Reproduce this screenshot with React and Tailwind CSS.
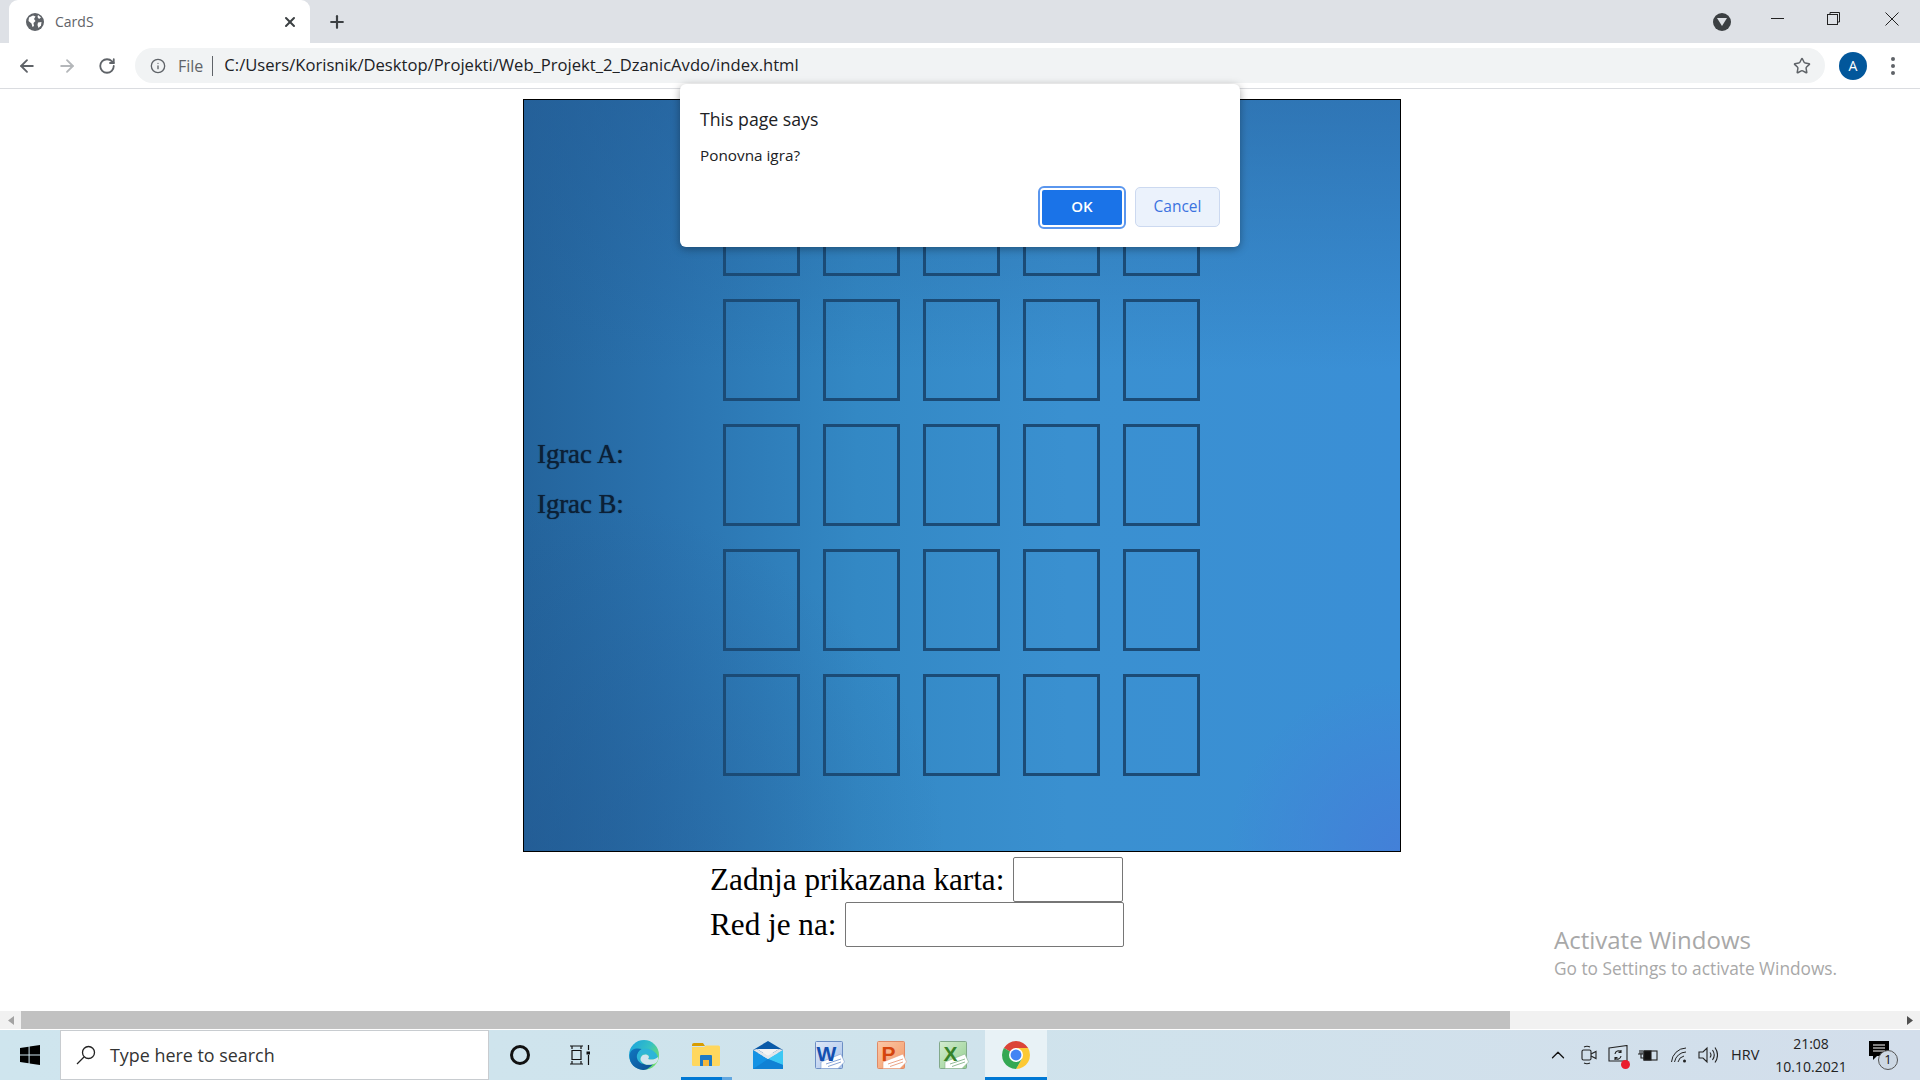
import React from "react";
import { ArrowLeft, ArrowRight, RotateCw, Info, Star, X, Plus, ChevronUp } from "lucide-react";

const UI = "font-['Open_Sans',sans-serif]";
const SERIF = "font-['Liberation_Serif',serif]";

function Globe() {
  return (
    <svg width="18" height="18" viewBox="0 0 18 18">
      <circle cx="9" cy="9" r="9" fill="#5f6368" />
      <path d="M3 4.5 L7 2.5 L9.5 3.5 L8 6 L9.5 8 L7.5 10 L8 13 L6.5 14 L5.5 10.5 L2.5 8 Z" fill="#fff" />
      <path d="M12 9.5 L15.5 9 L15 12.5 L12.5 15 L11.5 12 Z" fill="#fff" />
      <path d="M12 2 L15 4.5 L13 6 L11.5 4 Z" fill="#fff" />
    </svg>
  );
}

function Edge() {
  return (
    <svg width="30" height="30" viewBox="0 0 30 30">
      <defs>
        <linearGradient id="e1" x1="0" y1="0" x2="1" y2="0.6">
          <stop offset="0" stopColor="#1aa0e0" />
          <stop offset="0.6" stopColor="#35c1c4" />
          <stop offset="1" stopColor="#6fdc6a" />
        </linearGradient>
        <linearGradient id="e2" x1="0" y1="0" x2="1" y2="1">
          <stop offset="0" stopColor="#1077c0" />
          <stop offset="1" stopColor="#0c4f92" />
        </linearGradient>
      </defs>
      <circle cx="15" cy="15" r="15" fill="url(#e1)" />
      <path d="M0.5 16 C1 8 8 8 13 9 C9 11 8 14 9 18 C10.5 24 17 26 24 24 C20 29 16 30 14 30 C6 29 0.5 24 0.5 16Z" fill="url(#e2)" />
      <path d="M13 9 C20 7 27 11 29 17 C27 20 22 20 19 19 C22 16 18 12 13 14 C10 16 10 21 14 24 C10 23 7 19 8 15 C9 12 11 10 13 9Z" fill="#2db5d8" />
      <path d="M17 14.5 C19.5 15 21 17 19 19 C22 20 25.5 20 29 17 C29.5 19 29 21 27 23 C23 25.5 15 26 12 21 C10.5 18 13 14 17 14.5Z" fill="#d2e5ee" />
    </svg>
  );
}

function Explorer() {
  return (
    <svg width="28" height="26" viewBox="0 0 28 26">
      <path d="M0 3 Q0 1 2 1 H11 L13 4 H0 Z" fill="#d89c00" />
      <path d="M0 5 H12 L14 3.5 H26.5 Q28 3.5 28 5 V23 Q28 24 26.5 24 H1.5 Q0 24 0 23 Z" fill="#ffd75e" />
      <path d="M9 13 H19 Q20 13 20 14 V24 H17 V18 H11 V24 H8 V14 Q8 13 9 13Z" fill="#1f7ac6" />
      <rect x="11" y="18" width="6" height="6" fill="#f6b73c" />
    </svg>
  );
}

function Mail() {
  return (
    <svg width="30" height="28" viewBox="0 0 30 28">
      <path d="M15 0 L30 9 V12 H0 V9 Z" fill="#0a5aa8" />
      <path d="M4 8 H26 L15 15 Z" fill="#f4f4f4" />
      <path d="M0 9 L15 18 L30 9 V28 H0Z" fill="#1492e4" />
      <path d="M30 9 V24 L15 18 Z" fill="#3cc8f4" />
      <path d="M0 28 L15 18 L30 24 V28 Z" fill="#0f80d2" opacity="0.9" />
      <path d="M0 9 L4 8 L15 15 L26 8 L30 9 L15 18 Z" fill="#e2e6ea" />
    </svg>
  );
}

function Office({ id, letter, border, from, to, color, page }) {
  return (
    <svg width="30" height="28" viewBox="0 0 30 28">
      <defs>
        <linearGradient id={id} x1="0" y1="0" x2="1" y2="1">
          <stop offset="0" stopColor={from} />
          <stop offset="1" stopColor={to} />
        </linearGradient>
      </defs>
      <rect x="0.5" y="0.5" width="27" height="27" rx="1" fill={"url(#" + id + ")"} stroke={border} />
      <path d="M6 21 L26 13 L29.5 21 L23 27.5 H6 Z" fill="#fff" stroke={page} strokeWidth="0.6" />
      <path d="M11 23 L26 18 M13 25.5 L26 21" stroke={page} strokeWidth="0.9" />
      <text x="11.5" y="19.5" fontSize="21" fontWeight="700" fill={color} textAnchor="middle" fontFamily="'Liberation Sans',sans-serif">{letter}</text>
    </svg>
  );
}

function Chrome() {
  return (
    <svg width="28" height="28" viewBox="4 4 40 40">
      <path d="M6.68 14A20 20 0 0 1 41.32 14H24L15.34 19Z" fill="#db4437" />
      <path d="M41.32 14A20 20 0 0 1 24 44L32.66 29L24 24V14Z" fill="#fcc934" />
      <path d="M24 44A20 20 0 0 1 6.68 14L15.34 19L24 24L32.66 29Z" fill="#34a853" />
      <circle cx="24" cy="24" r="10" fill="#fff" />
      <circle cx="24" cy="24" r="7.8" fill="#4285f4" />
    </svg>
  );
}

function TaskCell({ children, className = "" }) {
  return <div className={"h-full flex items-center justify-center shrink-0 " + className}>{children}</div>;
}

function Card() {
  return <div className="w-[77px] h-[102px] border-[3px] border-[#1b4b76]" />;
}

export default function App() {
  const cards = Array.from({ length: 25 }, (_, i) => i);
  return (
    <div className="w-[1920px] h-[1080px] overflow-hidden relative bg-white flex flex-col">
      {/* Tab strip */}
      <div className="h-[43px] bg-[#dee1e6] flex items-end shrink-0">
        <div className="ml-[9px] w-[301px] h-[43px] bg-white rounded-t-[9px] flex items-center pl-[17px] pr-[12px]">
          <Globe />
          <span className={UI + " ml-[11px] text-[14px] text-[#5f6368] flex-1"}>CardS</span>
          <X size={16} strokeWidth={3} color="#3c4043" />
        </div>
        <div className="h-[43px] ml-[17px] flex items-center">
          <Plus size={20} strokeWidth={2.6} color="#3c4043" />
        </div>
        <div className="flex-1 h-[43px] flex items-center justify-end">
          <div className="w-[18px] h-[18px] rounded-full bg-[#3c4043] flex items-center justify-center mr-[40px]">
            <svg width="10" height="8" viewBox="0 0 10 8"><path d="M0 0 H10 L5 8Z" fill="#dee1e6" /></svg>
          </div>
          <div className="w-[13px] h-[1px] bg-[#222] mb-[6px] mr-[43px]" />
          <svg width="13" height="13" viewBox="0 0 13 13" className="mb-[6px] mr-[45px]" fill="none" stroke="#222">
            <rect x="0.5" y="2.5" width="10" height="10" />
            <path d="M3 2.5 V0.5 H12.5 V10 H10.5" />
          </svg>
          <svg width="14" height="14" viewBox="0 0 14 14" className="mb-[6px] mr-[21px]" stroke="#222">
            <path d="M0.5 0.5 L13.5 13.5 M13.5 0.5 L0.5 13.5" />
          </svg>
        </div>
      </div>

      {/* Toolbar */}
      <div className="h-[46px] shrink-0 bg-white border-b border-[#dadce0] flex items-center">
        <div className="w-[135px] flex items-center shrink-0">
          <ArrowLeft size={20} strokeWidth={2.2} color="#5f6368" className="ml-[17px]" />
          <ArrowRight size={20} strokeWidth={2.2} color="#b4b7ba" className="ml-[20px]" />
          <RotateCw size={18} strokeWidth={2.4} color="#5f6368" className="ml-[21px]" />
        </div>
        <div className="w-[1690px] h-[35px] rounded-full bg-[#f1f3f4] flex items-center pl-[15px] pr-[14px]">
          <Info size={16} color="#5f6368" strokeWidth={2} />
          <span className={UI + " ml-[12px] text-[16px] text-[#5f6368]"}>File</span>
          <span className="ml-[9px] w-[1px] h-[20px] bg-[#5f6368]" />
          <span className={UI + " ml-[11px] text-[16.6px] text-[#202124] flex-1"}>C:/Users/Korisnik/Desktop/Projekti/Web_Projekt_2_DzanicAvdo/index.html</span>
          <Star size={18} color="#5f6368" strokeWidth={2} />
        </div>
        <div className="ml-[14px] w-[28px] h-[28px] rounded-full bg-[#02579b] flex items-center justify-center">
          <span className={UI + " text-white text-[14px]"}>A</span>
        </div>
        <div className="ml-[24px] flex flex-col gap-[3px]">
          <span className="w-[4px] h-[4px] rounded-full bg-[#5f6368]" />
          <span className="w-[4px] h-[4px] rounded-full bg-[#5f6368]" />
          <span className="w-[4px] h-[4px] rounded-full bg-[#5f6368]" />
        </div>
      </div>

      {/* Page */}
      <div className="flex-1 pt-[10px] bg-white">
        <div className="ml-[523px] w-[878px] h-[753px] border border-black flex bg-[radial-gradient(circle_at_100%_100%,#4380d8_0%,rgba(67,128,216,0)_15%),radial-gradient(ellipse_at_0%_100%,rgba(34,88,145,0.55)_0%,rgba(34,88,145,0)_34%),linear-gradient(180deg,rgba(36,92,150,0.5)_0%,rgba(36,92,150,0)_36%),linear-gradient(90deg,#24649c_0%,#2a72ae_16%,#3388c4_38%,#3a90d0_62%,#3a8fd6_100%)]">
          <div className="w-[199px] shrink-0 pl-[13px] pt-[339px]">
            <div className={SERIF + " text-[26.7px] leading-[30px] text-[#0c2036] [text-shadow:0_0_1px_#0c2036]"}>Igrac A:</div>
            <div className={SERIF + " mt-[20px] text-[26.7px] leading-[30px] text-[#0c2036] [text-shadow:0_0_1px_#0c2036]"}>Igrac B:</div>
          </div>
          <div className="pt-[74px] grid grid-cols-[repeat(5,77px)] gap-x-[23px] gap-y-[23px] content-start">
            {cards.map((c) => <Card key={c} />)}
          </div>
        </div>
        <div className={SERIF + " ml-[710px] mt-[5px] text-[31.2px] leading-[45px] text-black"}>
          <div className="flex items-center h-[45px]">
            <span>Zadnja prikazana karta:</span>
            <div className="ml-[9px] w-[110px] h-[45px] border border-[#767676] rounded-[2px] bg-white" />
          </div>
          <div className="flex items-center h-[45px]">
            <span>Red je na:</span>
            <div className="ml-[9px] w-[279px] h-[45px] border border-[#767676] rounded-[2px] bg-white" />
          </div>
        </div>
      </div>

      {/* Scrollbar */}
      <div className="h-[19px] shrink-0 bg-[#f1f1f1] flex items-center border-b border-white">
        <div className="w-[21px] flex justify-center">
          <svg width="6" height="9" viewBox="0 0 6 9"><path d="M6 0 V9 L0 4.5Z" fill="#a3a3a3" /></svg>
        </div>
        <div className="w-[1489px] h-[18px] bg-[#c1c1c1]" />
        <div className="flex-1 flex justify-end pr-[7px]">
          <svg width="6" height="9" viewBox="0 0 6 9"><path d="M0 0 V9 L6 4.5Z" fill="#505050" /></svg>
        </div>
      </div>

      {/* Taskbar */}
      <div className="h-[50px] shrink-0 flex items-center bg-[linear-gradient(90deg,#cfe5ee_0%,#cfe3ec_50%,#d3deeb_100%)]">
        <TaskCell className="w-[60px]">
          <svg width="20" height="20" viewBox="0 0 20 20" fill="#000">
            <path d="M0 3 L8.6 1.7 V9.4 H0Z M9.6 1.5 L20 0 V9.4 H9.6Z M0 10.5 H8.6 V18.3 L0 17Z M9.6 10.5 H20 V20 L9.6 18.5Z" />
          </svg>
        </TaskCell>
        <div className="w-[429px] h-[50px] bg-white border border-[#c8ccd0] flex items-center pl-[15px] shrink-0">
          <svg width="20" height="20" viewBox="0 0 20 20" fill="none" stroke="#222" strokeWidth="1.3">
            <circle cx="12.5" cy="7.5" r="6" />
            <path d="M8 12 L1 19" />
          </svg>
          <span className={UI + " ml-[14px] text-[17.9px] text-[#333]"}>Type here to search</span>
        </div>
        <TaskCell className="w-[62px]">
          <div className="w-[20px] h-[20px] rounded-full border-[3px] border-[#111]" />
        </TaskCell>
        <TaskCell className="w-[62px] pr-[4px]">
          <svg width="20" height="20" viewBox="0 0 20 20" fill="none" stroke="#111" strokeWidth="1.2">
            <path d="M0 1 H13 M2 1 V4 M11 1 V4 M2 5.5 H11 V14.5 H2Z M0 19 H13 M2 16 V19 M11 16 V19 M18.5 0 V5 M18.5 10 V20" />
            <rect x="16.5" y="6.5" width="4" height="3" fill="#111" stroke="none" />
          </svg>
        </TaskCell>
        <TaskCell className="w-[62px]"><Edge /></TaskCell>
        <TaskCell className="w-[62px] relative">
          <Explorer />
          <div className="absolute left-[6px] bottom-0 w-[41px] h-[3px] bg-[#0078d4]" />
          <div className="absolute left-[47px] bottom-0 w-[10px] h-[3px] bg-[#62a7e0]" />
        </TaskCell>
        <TaskCell className="w-[62px]"><Mail /></TaskCell>
        <TaskCell className="w-[62px]">
          <Office id="ow" letter="W" border="#6c8ec4" from="#dfe9f8" to="#a9c2ea" color="#134fb0" page="#7a9ad0" />
        </TaskCell>
        <TaskCell className="w-[62px]">
          <Office id="op" letter="P" border="#e08a66" from="#fbc7a6" to="#f39a68" color="#d5450e" page="#e89a7a" />
        </TaskCell>
        <TaskCell className="w-[62px]">
          <Office id="ox" letter="X" border="#82a98a" from="#d4ecd0" to="#92cf8e" color="#37832a" page="#86b48c" />
        </TaskCell>
        <TaskCell className="w-[62px] relative bg-[#e8f2f6]">
          <Chrome />
          <div className="absolute left-0 bottom-0 w-full h-[3px] bg-[#0078d4]" />
        </TaskCell>

        <ChevronUp size={22} strokeWidth={1.4} color="#111" className="ml-[500px]" />
        <svg width="16" height="20" viewBox="0 0 16 20" fill="none" stroke="#222" strokeWidth="1.1" className="ml-[12px]">
          <rect x="1" y="5" width="9" height="10" rx="1.5" />
          <path d="M10 9 L15 6.5 V13.5 L10 11 M3 2 Q6 0.5 9 2 M3 18 Q6 19.5 9 18" />
        </svg>
        <div className="relative ml-[11px] w-[20px] h-[20px]">
          <svg width="20" height="20" viewBox="0 0 20 20" fill="none" stroke="#222" strokeWidth="1.1">
            <path d="M1 3 L19 0.5 V16 H1Z" />
            <path d="M7 9 A3.5 3.5 0 0 1 13 7 M13 11 A3.5 3.5 0 0 1 7 13 M13 5 V7.5 H10.5 M7 15 V12.5 H9.5" />
          </svg>
          <div className="absolute right-[-2px] bottom-[-4px] w-[9px] h-[9px] rounded-full bg-[#ea1c2c]" />
        </div>
        <svg width="20" height="14" viewBox="0 0 20 14" fill="none" stroke="#222" strokeWidth="1.1" className="ml-[10px]">
          <rect x="6" y="3" width="13" height="9" />
          <rect x="6" y="3" width="7" height="9" fill="#111" />
          <path d="M0 6 H5 M2 2 V6 M4 2 V6 M3 6 V10 H6" />
        </svg>
        <svg width="16" height="16" viewBox="0 0 16 16" fill="none" stroke="#222" strokeWidth="1" className="ml-[13px]">
          <path d="M0.5 15 A15 15 0 0 1 15 1 M3.5 15 A12 12 0 0 1 15 5 M7 15 A8 8 0 0 1 13 9" />
          <circle cx="13.5" cy="14" r="1.5" fill="#222" stroke="none" />
        </svg>
        <svg width="20" height="18" viewBox="0 0 20 18" fill="none" stroke="#222" strokeWidth="1.1" className="ml-[11px]">
          <path d="M1 6 H5 L9 2 V16 L5 12 H1Z M12 6.5 Q14 9 12 11.5 M14.5 4 Q18 9 14.5 14 M17 1.5 Q22 9 17 16.5" />
        </svg>
        <span className={UI + " ml-[13px] w-[28px] text-[14.5px] text-[#222]"}>HRV</span>
        <div className={UI + " ml-[12px] w-[80px] flex flex-col items-center text-[14px] leading-[23px] text-[#222]"}>
          <span>21:08</span>
          <span>10.10.2021</span>
        </div>
        <div className="relative ml-[18px] w-[20px] h-[20px] mb-[8px]">
          <svg width="20" height="20" viewBox="0 0 20 20">
            <path d="M0 0 H20 V15 H8 L4 19 V15 H0Z" fill="#000" />
            <path d="M4 4 H16 M4 7 H16 M4 10 H16" stroke="#fff" strokeWidth="1" />
          </svg>
          <div className={UI + " absolute left-[9px] top-[9px] w-[20px] h-[20px] rounded-full border border-[#555] bg-[#cdd8e4] flex items-center justify-center text-[13px] text-[#111]"}>1</div>
        </div>
      </div>

      {/* Watermark */}
      <div className={UI + " absolute left-[1554px] top-[924px] text-[#a8a8a8]"}>
        <div className="text-[24px] leading-[32px]">Activate Windows</div>
        <div className="text-[17.3px] leading-[24px] mt-[1px]">Go to Settings to activate Windows.</div>
      </div>

      {/* Dialog */}
      <div className={UI + " absolute left-[680px] top-[84px] w-[560px] h-[163px] bg-white rounded-[6px] shadow-[0_2px_8px_rgba(0,0,0,0.35)] px-[20px] pt-[22px]"}>
        <div className="text-[17.7px] leading-[26px] text-[#202124]">This page says</div>
        <div className="mt-[13px] text-[15.3px] leading-[20px] text-[#202124]">Ponovna igra?</div>
        <div className="absolute right-[20px] bottom-[20px] flex items-center gap-[11px]">
          <div className="w-[84px] h-[39px] rounded-[4px] bg-[#1a73e8] border-2 border-white outline-2 outline-[#5a96ee] flex items-center justify-center pb-[2px] text-[15px] font-semibold text-white">OK</div>
          <div className="w-[85px] h-[40px] rounded-[5px] bg-[#ebf2fc] border border-[#ccd9f0] flex items-center justify-center text-[15.5px] text-[#3b73e0]">Cancel</div>
        </div>
      </div>
    </div>
  );
}
